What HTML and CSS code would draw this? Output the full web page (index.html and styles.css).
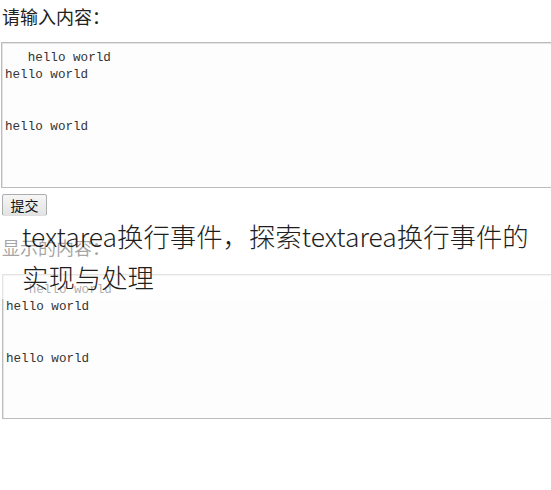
FILE: index.html
```html
<!DOCTYPE html>
<html lang="zh-CN">
<head>
    <meta charset="UTF-8">
    <title>textarea换行事件</title>
    <link rel="stylesheet" href="styles.css">
</head>
<body>
    <div class="label">请输入内容：</div>
    <textarea class="box box-input" id="input">   hello world
hello world


hello world</textarea>
    <button class="submit" onclick="show()">提交</button>

    <div class="label label-show">显示的内容：</div>
    <textarea class="box box-output" id="output" readonly>   hello world
hello world


hello world</textarea>

    <div class="caption">textarea换行事件，探索textarea换行事件的<br>实现与处理</div>

    <script>
        function show() {
            document.getElementById('output').value = document.getElementById('input').value;
        }
    </script>
</body>
</html>
```

FILE: styles.css
```css
html, body {
    overflow: hidden;
}
body {
    margin: 0;
    font-family: "Noto Sans CJK SC", "Noto Sans", sans-serif;
    color: #222;
    background: #fff;
}
.label {
    font-size: 18px;
    line-height: 24px;
    margin: 4px 0 14px 2px;
}
.label-show {
    margin: 19px 0 15px 2px;
}
.box {
    display: block;
    box-sizing: border-box;
    width: 570px;
    margin: 0 0 0 1px;
    padding: 7px 3px 4px;
    border: 1px solid #bcbcbc;
    box-shadow: inset 1px 1px 0 #e4e4e4;
    background: #fdfdfd;
    font-family: "Liberation Mono", "Courier New", monospace;
    font-size: 12.6px;
    line-height: 17.3px;
    color: #333;
    resize: none;
    outline: none;
}
.box-input {
    height: 146px;
}
.box-output {
    height: 145px;
    margin-left: 2px;
}
.submit {
    display: block;
    margin: 6px 0 0 2px;
    height: 22px;
    width: 45px;
    padding: 0;
    font-family: "Noto Sans CJK SC", sans-serif;
    font-size: 14px;
    color: #111;
    background: linear-gradient(#f6f6f6, #e3e3e3);
    border: 1px solid #acacac;
    border-radius: 2px;
}
.caption {
    position: absolute;
    top: 215px;
    left: 0;
    right: 0;
    padding: 0 0 2px 22px;
    background: rgba(255, 255, 255, 0.6);
    font-size: 26.4px;
    font-weight: 300;
    line-height: 41px;
    color: #1e1e1e;
}
```
